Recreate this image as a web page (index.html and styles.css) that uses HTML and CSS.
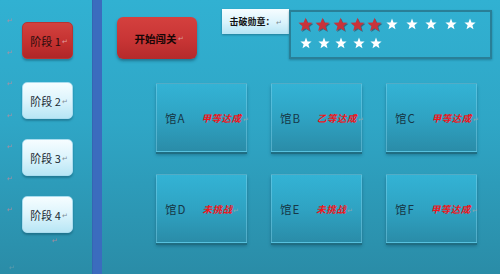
FILE: index.html
```html
<!DOCTYPE html>
<html lang="zh">
<head>
<meta charset="utf-8">
<link rel="stylesheet" href="styles.css">
</head>
<body>
<svg width="0" height="0" class="defs">
  <defs>
    <symbol id="star" viewBox="0 0 24 24"><polygon points="12,1 15,8.8 23.2,9.2 16.8,14.3 19,22.3 12,17.8 5,22.3 7.2,14.3 0.8,9.2 9,8.8"/></symbol>
  </defs>
</svg>
<div class="page">
  <aside class="side">
    <div class="marks">
      <span>↵</span><span>↵</span><span>↵</span><span>↵</span><span>↵</span><span>↵</span><span>↵</span>
    </div>
    <div class="stages">
      <div class="stage active">阶段 1<i>↵</i></div>
      <div class="stage">阶段 2<i>↵</i></div>
      <div class="stage">阶段 3<i>↵</i></div>
      <div class="stage">阶段 4<i>↵</i></div>
      <span class="tail-mark">↵</span>
    </div>
    <span class="end-mark">↵</span>
  </aside>
  <div class="bar"></div>
  <main class="main">
    <div class="top">
      <div class="start">开始闯关<i>↵</i></div>
      <div class="medal-label">击破勋章：<i>↵</i></div>
      <div class="stars">
        <div class="row row1">
          <svg class="s red"><use href="#star"/></svg>
          <svg class="s red"><use href="#star"/></svg>
          <svg class="s red"><use href="#star"/></svg>
          <svg class="s red"><use href="#star"/></svg>
          <svg class="s red"><use href="#star"/></svg>
          <svg class="s white first"><use href="#star"/></svg>
          <svg class="s white"><use href="#star"/></svg>
          <svg class="s white"><use href="#star"/></svg>
          <svg class="s white"><use href="#star"/></svg>
          <svg class="s white"><use href="#star"/></svg>
        </div>
        <div class="row row2">
          <svg class="s white"><use href="#star"/></svg>
          <svg class="s white"><use href="#star"/></svg>
          <svg class="s white"><use href="#star"/></svg>
          <svg class="s white"><use href="#star"/></svg>
          <svg class="s white"><use href="#star"/></svg>
        </div>
      </div>
    </div>
    <div class="halls">
      <div class="hall"><span class="name">馆A</span><span class="status">甲等达成<i>↵</i></span></div>
      <div class="hall"><span class="name">馆B</span><span class="status">乙等达成<i>↵</i></span></div>
      <div class="hall"><span class="name">馆C</span><span class="status">甲等达成<i>↵</i></span></div>
      <div class="hall"><span class="name">馆D</span><span class="status">未挑战<i>↵</i></span></div>
      <div class="hall"><span class="name">馆E</span><span class="status">未挑战<i>↵</i></span></div>
      <div class="hall"><span class="name">馆F</span><span class="status">甲等达成<i>↵</i></span></div>
    </div>
  </main>
</div>
</body>
</html>
```
FILE: styles.css
```css
* { box-sizing: border-box; }
html, body { margin: 0; padding: 0; }
body {
  width: 500px;
  height: 274px;
  overflow: hidden;
  font-family: "Noto Sans CJK SC", "Liberation Sans", sans-serif;
  background: linear-gradient(180deg, #31b1d2 0%, #2fa6c6 45%, #2a8ca7 100%);
}
.defs { position: absolute; }
.page {
  display: flex;
  height: 274px;
}
i {
  font-style: normal;
  font-size: 7px;
  color: #7d8c94;
  font-weight: normal;
  margin-left: 1px;
}
.side {
  width: 92px;
  display: flex;
  position: relative;
}
.marks {
  width: 22px;
  padding-top: 15px;
  padding-left: 7px;
  display: flex;
  flex-direction: column;
  gap: 20.5px;
}
.marks span, .tail-mark, .end-mark {
  font-size: 7px;
  line-height: 11px;
  color: #c88a9a;
  opacity: 0.8;
}
.stages {
  display: flex;
  flex-direction: column;
  padding-top: 22px;
  gap: 20px;
  width: 52px;
}
.stage {
  height: 37px;
  width: 51px;
  border-radius: 5px;
  background: linear-gradient(180deg, #f6fdff 0%, #dcf4fc 50%, #b8e6f5 100%);
  border: 1px solid #a9dcee;
  box-shadow: 0 2px 2px rgba(10, 60, 80, 0.35);
  display: flex;
  align-items: center;
  justify-content: center;
  font-size: 11px;
  color: #1a2a33;
  padding-left: 3px;
}
.stage.active {
  background: linear-gradient(180deg, #d2423f 0%, #c3302f 60%, #b02628 100%);
  border-color: #b73432;
  margin-bottom: 3px;
  color: #2a0c0c;
}
.stage.active i { color: #e0a0a0; }
.tail-mark {
  align-self: flex-end;
  margin-top: -18px;
  margin-right: 16px;
}
.end-mark {
  position: absolute;
  left: 9px;
  top: 262px;
  color: #6a9fae;
}
.bar {
  width: 10px;
  background: #3b6cbe;
  border-left: 1px solid #3565b3;
}
.main {
  flex: 1;
  display: flex;
  flex-direction: column;
}
.top {
  display: flex;
  align-items: flex-start;
}
.start {
  margin-top: 17px;
  margin-left: 15px;
  width: 80px;
  height: 42px;
  border-radius: 6px;
  background: linear-gradient(180deg, #d4403e 0%, #c83535 55%, #b52a2b 100%);
  box-shadow: 0 2px 3px rgba(10, 50, 70, 0.45);
  display: flex;
  align-items: center;
  justify-content: center;
  font-size: 10.5px;
  font-weight: bold;
  color: #160606;
  padding-left: 4px;
}
.start i { color: #d89a9a; }
.medal-label {
  margin-left: 25px;
  margin-top: 9px;
  width: 67px;
  height: 25px;
  background: linear-gradient(180deg, #f7fdff 0%, #d9f3fc 55%, #b6e4f4 100%);
  box-shadow: 0 1px 2px rgba(10, 50, 70, 0.4);
  display: flex;
  align-items: center;
  justify-content: center;
  font-size: 9px;
  font-weight: bold;
  color: #111;
}
.stars {
  margin-top: 10px;
  width: 203px;
  height: 49px;
  border: 2px solid #297f97;
  box-shadow: 0 1px 2px rgba(10, 50, 70, 0.35);
  display: flex;
  flex-direction: column;
  padding-top: 2px;
}
.row { display: flex; align-items: center; }
.row1 { padding-left: 7px; height: 20px; }
.row2 { padding-left: 9px; height: 18px; }
.s { display: block; }
.s.red {
  width: 15px;
  height: 15px;
  fill: #c9333a;
  margin-right: 2.3px;
  filter: drop-shadow(1px 1px 0 rgba(60, 20, 30, 0.45));
}
.s.white {
  width: 12px;
  height: 12px;
  fill: #ffffff;
}
.row1 .s.white { margin-right: 7.5px; }
.row1 .s.white.first { margin-left: 2px; }
.row2 .s.white { margin-right: 5.5px; }
.halls {
  margin-top: 24px;
  margin-left: 54px;
  display: grid;
  grid-template-columns: repeat(3, 91px);
  grid-auto-rows: 69px;
  column-gap: 24px;
  row-gap: 22px;
}
.hall {
  background: linear-gradient(180deg, #33b3d5 0%, #2fa3c3 50%, #2a8ca8 100%);
  border: 1px solid rgba(130, 210, 235, 0.45);
  box-shadow: 0 2px 0 #1f6d82, 0 3px 3px rgba(10, 50, 70, 0.35);
  display: flex;
  align-items: center;
  padding-left: 8px;
  gap: 16px;
}
.name {
  font-size: 11.5px;
  color: #173847;
  white-space: nowrap;
  letter-spacing: 1px;
}
.status {
  font-family: "Noto Sans CJK SC", serif;
  font-size: 9.5px;
  font-weight: bold;
  font-style: italic;
  color: #f0141a;
  letter-spacing: 0.5px;
  white-space: nowrap;
}
.status i { color: #8aa3ad; }
```
